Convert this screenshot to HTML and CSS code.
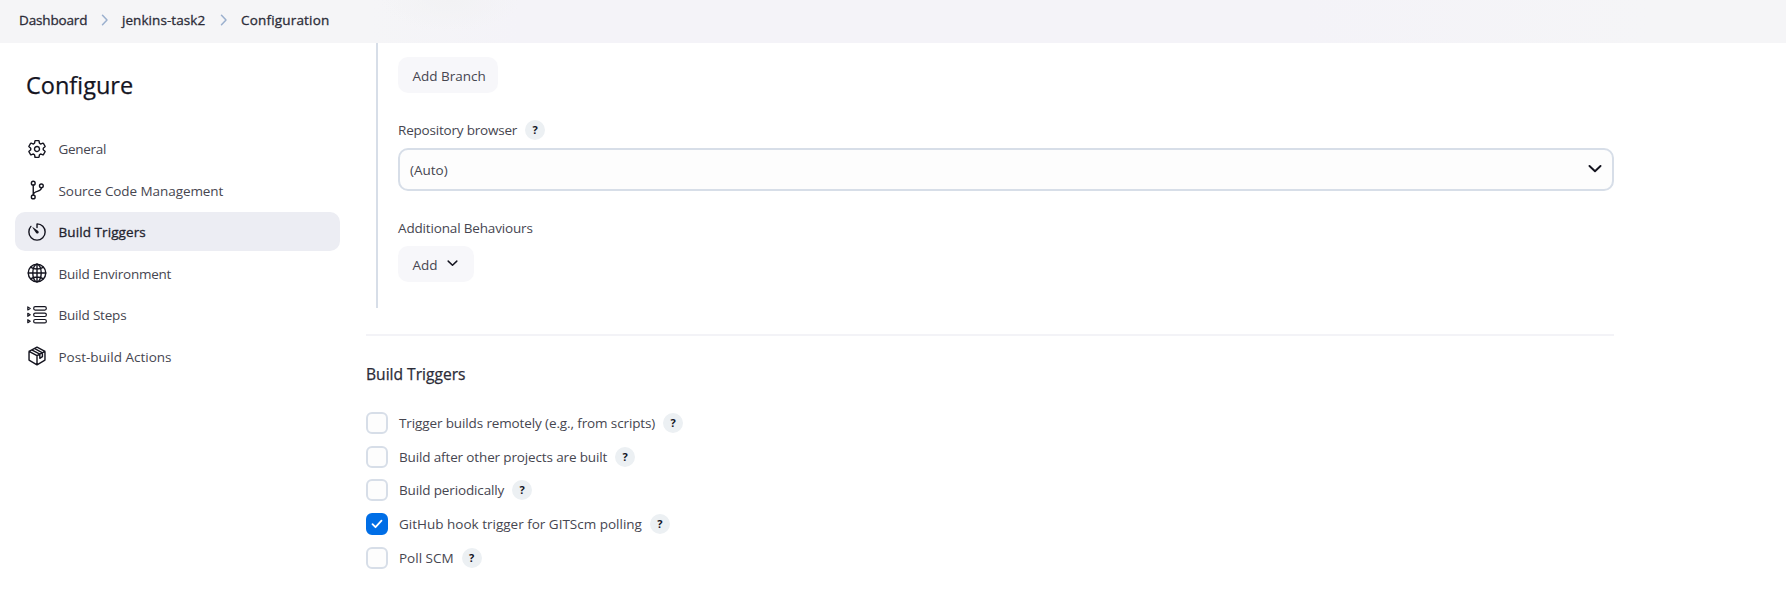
FILE: index.html
```
<!DOCTYPE html>
<html lang="en">
<head>
<meta charset="utf-8">
<title>jenkins-task2 Config</title>
<link rel="stylesheet" href="styles.css">
</head>
<body>
<header class="breadcrumbs">
  <span class="crumb crumb-dashboard">Dashboard</span>
  <svg class="crumb-sep" viewBox="0 0 8 12"><path d="M1.500 1.200 6 6l-4.500 4.800"/></svg>
  <span class="crumb crumb-job">jenkins-task2</span>
  <svg class="crumb-sep" viewBox="0 0 8 12"><path d="M1.500 1.200 6 6l-4.500 4.800"/></svg>
  <span class="crumb crumb-config">Configuration</span>
</header>
<div class="page">
  <aside class="sidebar">
    <h1 class="title"><span>Configure</span></h1>
    <nav class="tasks">
      <a class="task"><svg class="icon" viewBox="0 0 512 512"><path d="M262.290 192.310a64 64 0 1 0 57.400 57.400 64.130 64.130 0 0 0-57.400-57.400zM416.390 256a154.340 154.340 0 0 1-1.530 20.790l45.210 35.460a10.810 10.810 0 0 1 2.450 13.750l-42.770 74a10.810 10.810 0 0 1-13.140 4.590l-44.900-18.080a16.110 16.110 0 0 0-15.170 1.750A164.480 164.480 0 0 1 325 400.800a15.940 15.940 0 0 0-8.820 12.140l-6.730 47.890a11.080 11.080 0 0 1-10.680 9.170h-85.540a11.110 11.110 0 0 1-10.690-8.870l-6.720-47.820a16.070 16.070 0 0 0-9-12.220 155.300 155.300 0 0 1-21.460-12.570 16 16 0 0 0-15.110-1.710l-44.890 18.070a10.810 10.810 0 0 1-13.140-4.580l-42.770-74a10.800 10.800 0 0 1 2.450-13.750l38.210-30a16.050 16.050 0 0 0 6-14.080c-.36-4.170-.58-8.330-.58-12.500s.21-8.270.58-12.350a16 16 0 0 0-6.070-13.940l-38.190-30A10.810 10.810 0 0 1 49.480 186l42.770-74a10.810 10.810 0 0 1 13.140-4.590l44.900 18.080a16.110 16.110 0 0 0 15.170-1.750A164.480 164.480 0 0 1 187 111.200a15.940 15.940 0 0 0 8.820-12.140l6.730-47.890A11.080 11.080 0 0 1 213.230 42h85.540a11.110 11.110 0 0 1 10.690 8.870l6.720 47.820a16.070 16.070 0 0 0 9 12.220 155.300 155.300 0 0 1 21.460 12.570 16 16 0 0 0 15.110 1.710l44.890-18.070a10.810 10.810 0 0 1 13.140 4.580l42.770 74a10.800 10.800 0 0 1-2.450 13.750l-38.210 30a16.050 16.050 0 0 0-6.050 14.080c.33 4.140.55 8.300.55 12.470z"/></svg><span class="t1">General</span></a>
      <a class="task"><svg class="icon" viewBox="0 0 512 512"><circle cx="160" cy="80" r="48"/><circle cx="160" cy="432" r="48"/><circle cx="368" cy="150" r="48"/><path d="M160 384V128M368 198c0 128-208 56-208 186"/></svg><span class="t2">Source Code Management</span></a>
      <a class="task active"><svg class="icon" viewBox="0 0 512 512"><path d="M100 112A207 207 0 0 0 48 254c-1.180 115 92 209 208 210 114 .2 208-93 208-208 0-112-90-205-203-208a4.360 4.360 0 0 0-4.500 4.370V140"/><path class="solid" d="m233.380 278.630-92-132a8.130 8.130 0 0 1 11.320-11.320l132 92a34 34 0 0 1-43.250 59.260 33.210 33.210 0 0 1-8.070-7.940z"/></svg><span class="t3">Build Triggers</span></a>
      <a class="task"><svg class="icon wide" viewBox="0 0 512 512"><circle cx="256" cy="256" r="224"/><ellipse cx="256" cy="256" rx="108" ry="224"/><path d="M256 32v448M32 256h448M102 112c84 56 224 56 308 0M102 400c84-56 224-56 308 0"/></svg><span class="t4">Build Environment</span></a>
      <a class="task"><svg class="icon thin" viewBox="0 0 20 20"><rect x="6.700" y="1.700" width="12.600" height="3.400" rx="1.500"/><rect x="6.700" y="8.100" width="12.600" height="3.400" rx="1.500"/><rect x="6.700" y="14.500" width="12.600" height="3.400" rx="1.500"/><path d="M.8 1.900v3L3.200 3.400zM.8 8.300v3l2.400-1.500zM.8 14.700v3l2.400-1.500z"/></svg><span class="t5">Build Steps</span></a>
      <a class="task"><svg class="icon" viewBox="0 0 512 512"><path d="M256 28 460 135v226L256 484 52 361V135zM52 135l204 112 204-112M256 247v237M120 99l208 112v104l67-43v-98L190 63"/></svg><span class="t6">Post-build Actions</span></a>
    </nav>
  </aside>
  <main class="config">
    <section class="scm">
      <button class="button branch"><span class="b1">Add Branch</span></button>
      <div class="label-row"><span class="l1">Repository browser</span><span class="help">?</span></div>
      <div class="select"><span class="s1">(Auto)</span><svg class="chevron" viewBox="0 0 14 8"><path d="m1.500 1 5.500 5.300L12.500 1"/></svg></div>
      <div class="label-row extra"><span class="l2">Additional Behaviours</span></div>
      <button class="button add"><span class="b2">Add</span><svg class="chevron small" viewBox="0 0 14 8"><path d="m1.500 1 5.500 5.300L12.500 1"/></svg></button>
    </section>
    <section class="triggers">
      <h2 class="section-title"><span>Build Triggers</span></h2>
      <div class="option"><span class="check"></span><span class="o1">Trigger builds remotely (e.g., from scripts)</span><span class="help">?</span></div>
      <div class="option"><span class="check"></span><span class="o2">Build after other projects are built</span><span class="help">?</span></div>
      <div class="option"><span class="check"></span><span class="o3">Build periodically</span><span class="help">?</span></div>
      <div class="option"><span class="check checked"><svg viewBox="0 0 12 10"><path d="m1.500 5.200 3 3 6-6.500"/></svg></span><span class="o4">GitHub hook trigger for GITScm polling</span><span class="help">?</span></div>
      <div class="option"><span class="check"></span><span class="o5">Poll SCM</span><span class="help">?</span></div>
    </section>
  </main>
</div>
</body>
</html>
```
FILE: styles.css
```
* { box-sizing: border-box; }
body {
  margin: 0;
  height: 595px;
  overflow: hidden;
  background: #fff;
  color: #464650;
  font: 13.5px/20px "Open Sans", "Noto Sans", sans-serif;
  white-space: nowrap;
}
svg { flex: none; fill: none; stroke: currentColor; stroke-linecap: round; stroke-linejoin: round; }

.breadcrumbs {
  display: flex;
  align-items: center;
  height: 43px;
  padding: 0 0 3px 19px;
  background:
    radial-gradient(ellipse 70px 32px at 450px 0, #f2f2f4 0, #f2f2f400 100%),
    linear-gradient(90deg, #f5f5f7 0 370px, #f4f3f8 520px, #f4f3f8 1300px, #f5f5f7 1650px);
}
.crumb { font-size: 13.5px; color: #2c2c38; -webkit-text-stroke: .3px; }
.crumb-dashboard { width: 68px; letter-spacing: -.15px; }
.crumb-job { width: 84px; letter-spacing: .06px; }
.crumb-config { letter-spacing: .18px; }
.crumb-sep { width: 8px; height: 12px; margin: 0 13px 0 14px; stroke: #9bb0ce; stroke-width: 1.500; }

.page { display: flex; }
.sidebar { width: 366px; padding: 0 26px 0 15px; }
.title { margin: 27px 0 0 11px; font-size: 23.500px; line-height: 31px; font-weight: 400; color: #14141f; -webkit-text-stroke: .25px; }
.tasks { display: flex; flex-direction: column; margin-top: 28px; gap: 2.600px; }
.task { display: flex; align-items: center; height: 39px; padding-left: 12px; border-radius: 10px; gap: 11.500px; }
.task span { padding-top: 1px; }
.active { background: #ecedf3; color: #23232e; -webkit-text-stroke: .3px; }
.icon { width: 20px; height: 20px; color: #14141f; stroke-width: 36; -webkit-text-stroke: 0; }
.thin { stroke-width: 1.200; }
.solid { fill: #14141f; stroke: none; }
.t1 { letter-spacing: -.3px; }
.t2 { letter-spacing: -.07px; }
.t3 { letter-spacing: .08px; }
.t4 { letter-spacing: -.23px; }
.t5 { letter-spacing: -.2px; }

.config { width: 1248px; }
.scm {
  height: 265px;
  margin-left: 10px;
  padding: 14px 0 0 20px;
  border-left: 2px solid #d7dee8;
}
.button {
  display: flex;
  align-items: center;
  height: 36px;
  padding: 2px 14px 0 14.500px;
  border: 0;
  border-radius: 10px;
  background: #f7f7fa;
  color: #464650;
  font: inherit;
}
.branch { width: 100px; }
.add { width: 76px; gap: 9px; }
.label-row { display: flex; align-items: center; height: 20px; margin: 27px 0 8px; gap: 8px; }
.l1 { letter-spacing: -.2px; }
.l2 { letter-spacing: -.16px; }
.help {
  flex: none;
  width: 20px;
  height: 20px;
  border-radius: 50%;
  background: #ecf0f3;
  color: #14141f;
  font: 700 11px/20px "Open Sans", sans-serif;
  text-align: center;
}
.select {
  display: flex;
  align-items: center;
  justify-content: space-between;
  height: 43px;
  padding: 0 10px;
  border: 2px solid #d7dee8;
  border-radius: 10px;
  background: #fdfdfd;
}
.chevron { width: 14px; height: 8px; margin-top: -1px; color: #14141f; stroke-width: 1.900; }
.small { width: 11px; height: 7px; margin-top: -3px; }

.triggers { margin-top: 26px; padding-top: 27px; border-top: 2px solid #f3f3f7; }
.section-title { margin: 0 0 26px; font-size: 15.600px; line-height: 23px; font-weight: 400; color: #2c2c38; -webkit-text-stroke: .25px; }
.option { display: flex; align-items: center; height: 22px; margin-bottom: 11.700px; }
.option .help { margin-left: 8px; }
.o1 { letter-spacing: -.12px; }
.o2 { letter-spacing: -.14px; }
.o3 { letter-spacing: -.14px; }
.check { flex: none; width: 22px; height: 22px; margin-right: 11px; border: 2px solid #d7dee8; border-radius: 6px; background: #fdfdfd; }
.checked { display: grid; place-items: center; border-color: #006ee6; background: #006ee6; }
.checked svg { width: 12px; height: 10px; stroke: #fff; stroke-width: 1.800; }
```
